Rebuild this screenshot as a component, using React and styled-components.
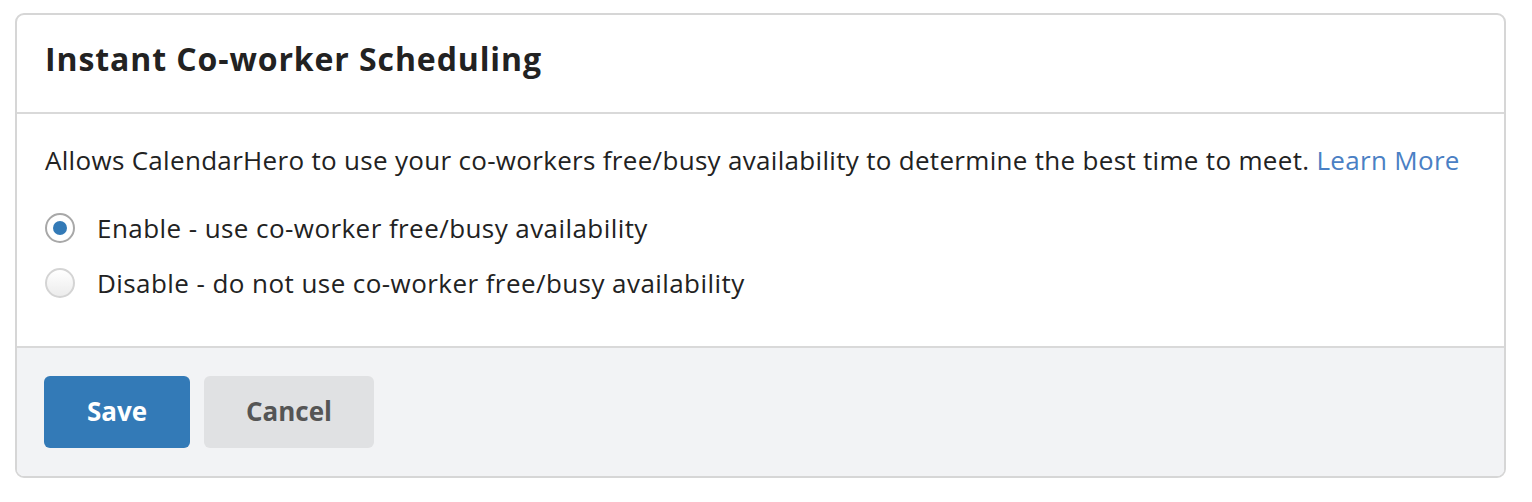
import React, { useState } from "react";
import styled, { createGlobalStyle } from "styled-components";

const Global = createGlobalStyle`
  html, body { margin: 0; padding: 0; background: #fff; }
  body { font-family: "Open Sans", "Noto Sans", sans-serif; color: #222; }
  * { box-sizing: border-box; }
`;

const Page = styled.div`
  padding: 13px 26px 0 15px;
`;

const Card = styled.div`
  width: 1491px;
  height: 465px;
  border: 2px solid #d6d6d6;
  border-radius: 9px;
  overflow: hidden;
  display: flex;
  flex-direction: column;
  background: #fff;
`;

const Header = styled.div`
  height: 99px;
  border-bottom: 2px solid #d9d9d9;
  display: flex;
  align-items: center;
  padding: 0 28px 11px;
`;

const Title = styled.h2`
  margin: 0;
  font-size: 32px;
  font-weight: 700;
  letter-spacing: 0.9px;
  color: #222;
`;

const Body = styled.div`
  flex: 1;
  padding: 28px 28px 0;
`;

const Description = styled.p`
  margin: 0 0 32px;
  font-size: 26px;
  line-height: 36px;
  letter-spacing: 0.31px;
  color: #222;
`;

const Link = styled.a`
  color: #4a80c4;
  text-decoration: none;
`;

const Options = styled.div`
  display: flex;
  flex-direction: column;
  gap: 19px;
`;

const Option = styled.label`
  display: flex;
  align-items: center;
  gap: 22px;
  font-size: 26px;
  line-height: 36px;
  letter-spacing: 0.43px;
  color: #222;
  cursor: pointer;
`;

const Radio = styled.span`
  width: 30px;
  height: 30px;
  border-radius: 50%;
  flex: none;
  display: flex;
  align-items: center;
  justify-content: center;
  border: 2px solid ${(p) => (p.$checked ? "#a8a8a8" : "#d4d4d4")};
  background: ${(p) => (p.$checked ? "#fff" : "linear-gradient(#ffffff, #ececec)")};
  &::after {
    content: "";
    display: ${(p) => (p.$checked ? "block" : "none")};
    width: 14px;
    height: 14px;
    border-radius: 50%;
    background: #337ab7;
  }
`;

const Footer = styled.div`
  height: 130px;
  border-top: 2px solid #d9d9d9;
  background: #f2f3f5;
  display: flex;
  align-items: center;
  gap: 14px;
  padding: 0 27px;
`;

const Button = styled.button`
  height: 72px;
  width: ${(p) => p.$w}px;
  border: none;
  border-radius: 6px;
  font-family: inherit;
  font-size: 26px;
  font-weight: 700;
  cursor: pointer;
  padding: 0 0 3px;
  background: ${(p) => (p.$primary ? "#337ab7" : "#e0e1e3")};
  color: ${(p) => (p.$primary ? "#fff" : "#555")};
`;

export default function App() {
  const [value, setValue] = useState("enable");
  return (
    <>
      <Global />
      <Page>
        <Card>
          <Header>
            <Title>Instant Co-worker Scheduling</Title>
          </Header>
          <Body>
            <Description>
              Allows CalendarHero to use your co-workers free/busy availability to determine the best time to meet.{" "}
              <Link href="#">Learn More</Link>
            </Description>
            <Options>
              <Option onClick={() => setValue("enable")}>
                <Radio $checked={value === "enable"} />
                Enable - use co-worker free/busy availability
              </Option>
              <Option onClick={() => setValue("disable")}>
                <Radio $checked={value === "disable"} />
                Disable - do not use co-worker free/busy availability
              </Option>
            </Options>
          </Body>
          <Footer>
            <Button $primary $w={146}>Save</Button>
            <Button $w={170}>Cancel</Button>
          </Footer>
        </Card>
      </Page>
    </>
  );
}
